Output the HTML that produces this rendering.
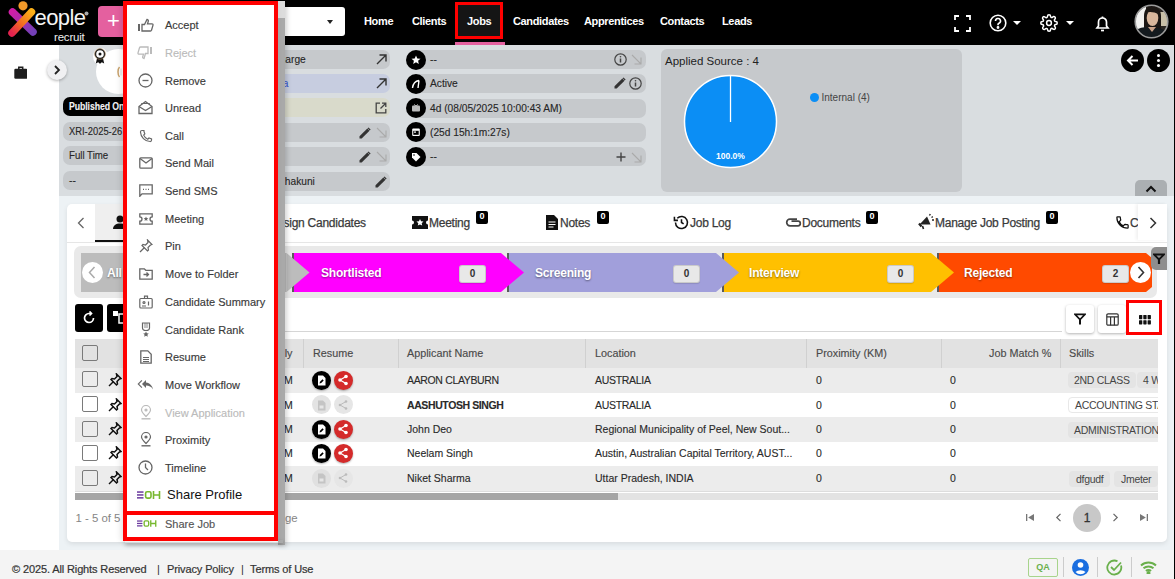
<!DOCTYPE html>
<html><head><meta charset="utf-8">
<style>
*{box-sizing:border-box;margin:0;padding:0}
html,body{width:1175px;height:579px;overflow:hidden;background:#f4f4f4;font-family:"Liberation Sans",sans-serif;color:#222;position:relative}
.a{position:absolute}
.nav{left:0;top:0;width:1175px;height:45px;background:#000}
.ni{position:absolute;top:14.3px;color:#fff;font-size:11px;font-weight:bold;letter-spacing:-0.35px;line-height:14px;white-space:nowrap}
.pill{position:absolute;height:19px;border-radius:7px;background:#c6c9cc;font-size:10.2px;line-height:19px;padding-left:6px;white-space:nowrap;overflow:hidden;color:#262626;-webkit-text-stroke:0.12px currentColor}
.ci{position:absolute;width:20px;height:20px;border-radius:50%;background:#000}
.mi{position:absolute;left:165px;font-size:11px;color:#3a3a3a;line-height:14px;white-space:nowrap;-webkit-text-stroke:0.15px currentColor}
.mico{position:absolute;left:137px;width:16px;height:16px}
.th{position:absolute;top:346px;font-size:10.8px;color:#4a4a4a;line-height:14px;white-space:nowrap;-webkit-text-stroke:0.15px currentColor}
.td{position:absolute;font-size:10.5px;color:#2a2a2a;line-height:14px;white-space:nowrap;-webkit-text-stroke:0.12px currentColor}
.row{position:absolute;left:75px;width:1083px;height:25px}
.cb{position:absolute;left:82px;width:16px;height:16px;border:1.5px solid #7a7a7a;border-radius:2px;background:transparent}
.stg{position:absolute;top:252px;height:40px}
.stt{position:absolute;top:266px;color:#fff;font-size:12px;font-weight:bold;text-shadow:0 1px 2px rgba(0,0,0,.45);line-height:14px;letter-spacing:-0.2px}
.cnt{position:absolute;top:265px;width:27px;height:18px;background:#e8e8e8;border-radius:3px;font-size:10px;font-weight:bold;text-align:center;line-height:16px;color:#333;border:1px solid rgba(0,0,0,.13);box-shadow:0 1px 1px rgba(0,0,0,.12)}
.tab{position:absolute;top:216px;font-size:12px;color:#3a3a3a;line-height:14px;white-space:nowrap;letter-spacing:-0.25px;-webkit-text-stroke:0.25px currentColor}
.bdg{position:absolute;top:211px;width:12px;height:12.5px;background:#000;color:#fff;font-size:9px;font-weight:bold;text-align:center;line-height:11px;border-radius:2px}
.chip{position:absolute;height:16px;border-radius:4px;background:#e4e4e4;font-size:10.5px;line-height:16px;padding:0 6px;color:#444;white-space:nowrap;letter-spacing:-0.3px}
</style></head><body>

<!-- NAVBAR -->
<div class="a nav"></div>
<!-- logo -->
<svg class="a" style="left:0px;top:0px" width="95" height="44" viewBox="0 0 95 44">
  <defs>
    <linearGradient id="g1" x1="0" y1="0" x2="1" y2="1"><stop offset="0" stop-color="#d01ea8"/><stop offset="1" stop-color="#7440b8"/></linearGradient>
    <linearGradient id="g2" x1="1" y1="0" x2="0" y2="1"><stop offset="0" stop-color="#fbb018"/><stop offset="0.55" stop-color="#f26a22"/><stop offset="1" stop-color="#e3234e"/></linearGradient>
  </defs>
  <line x1="12.5" y1="12" x2="33" y2="32" stroke="url(#g1)" stroke-width="7.5" stroke-linecap="round"/>
  <line x1="31.5" y1="12" x2="12" y2="33" stroke="url(#g2)" stroke-width="7.5" stroke-linecap="round"/>
  <circle cx="23" cy="5.8" r="4.6" fill="#f39a2a"/>
  <text x="34.5" y="25" font-family="Liberation Sans" font-size="22" fill="#f4f4f4" letter-spacing="-0.6">eople</text>
  <circle cx="86.5" cy="13.5" r="2" fill="#aaa"/>
  <text x="54" y="40.5" font-family="Liberation Sans" font-size="11.5" fill="#eee" letter-spacing="-0.2">recruit</text>
</svg>
<div class="a" style="left:98px;top:6px;width:31px;height:31px;background:#e4609f;border-radius:4px;color:#fff;font-size:22px;line-height:30px;text-align:center">+</div>
<div class="a" style="left:270px;top:7px;width:75px;height:29px;background:#fff;border-radius:3px"></div>
<div class="a" style="left:327px;top:19.5px;width:0;height:0;border-left:3.8px solid transparent;border-right:3.8px solid transparent;border-top:4.2px solid #222"></div>
<div class="ni" style="left:364px">Home</div>
<div class="ni" style="left:412px">Clients</div>
<div class="a" style="left:455px;top:2px;width:48px;height:37px;border:3.5px solid #f00;background:#151515"></div>
<div class="a" style="left:455px;top:42px;width:50px;height:3px;background:#e4609f"></div>
<div class="ni" style="left:467px">Jobs</div>
<div class="ni" style="left:513px">Candidates</div>
<div class="ni" style="left:584px">Apprentices</div>
<div class="ni" style="left:660px">Contacts</div>
<div class="ni" style="left:722px">Leads</div>
<!-- right icons -->
<svg class="a" style="left:954px;top:15px" width="17" height="17" viewBox="0 0 17 17" fill="none" stroke="#fff" stroke-width="1.8"><path d="M1 5V1h4M12 1h4v4M16 12v4h-4M5 16H1v-4"/></svg>
<svg class="a" style="left:989px;top:14px" width="18" height="18" viewBox="0 0 18 18" fill="none" stroke="#fff" stroke-width="1.6"><circle cx="9" cy="9" r="7.8"/><path d="M6.5 7a2.5 2.5 0 1 1 3.5 2.3c-.7.3-1 .8-1 1.5v.5"/><circle cx="9" cy="13.5" r=".6" fill="#fff"/></svg>
<div class="a" style="left:1013px;top:21px;width:0;height:0;border-left:4px solid transparent;border-right:4px solid transparent;border-top:4px solid #fff"></div>
<svg class="a" style="left:1040px;top:14px" width="18" height="18" viewBox="0 0 24 24" fill="none" stroke="#fff" stroke-width="2"><circle cx="12" cy="12" r="3.2"/><path d="M19.4 15a1.7 1.7 0 0 0 .3 1.8l.1.1a2 2 0 1 1-2.8 2.8l-.1-.1a1.7 1.7 0 0 0-1.8-.3 1.7 1.7 0 0 0-1 1.5V21a2 2 0 1 1-4 0v-.1a1.7 1.7 0 0 0-1.1-1.5 1.7 1.7 0 0 0-1.8.3l-.1.1a2 2 0 1 1-2.8-2.8l.1-.1a1.7 1.7 0 0 0 .3-1.8 1.7 1.7 0 0 0-1.5-1H3a2 2 0 1 1 0-4h.1a1.7 1.7 0 0 0 1.5-1.1 1.7 1.7 0 0 0-.3-1.8l-.1-.1a2 2 0 1 1 2.8-2.8l.1.1a1.7 1.7 0 0 0 1.8.3H9a1.7 1.7 0 0 0 1-1.5V3a2 2 0 1 1 4 0v.1a1.7 1.7 0 0 0 1 1.5 1.7 1.7 0 0 0 1.8-.3l.1-.1a2 2 0 1 1 2.8 2.8l-.1.1a1.7 1.7 0 0 0-.3 1.8V9a1.7 1.7 0 0 0 1.5 1H21a2 2 0 1 1 0 4h-.1a1.7 1.7 0 0 0-1.5 1z"/></svg>
<div class="a" style="left:1066px;top:21px;width:0;height:0;border-left:4px solid transparent;border-right:4px solid transparent;border-top:4px solid #fff"></div>
<svg class="a" style="left:1095px;top:15px" width="15" height="17" viewBox="0 0 15 17" fill="none" stroke="#fff" stroke-width="1.7"><path d="M2 13h11l-1.5-2V7a4 4 0 0 0-8 0v4z"/><path d="M6 15.5h3"/><path d="M7.5 1.5v1.5"/></svg>
<svg class="a" style="left:1134px;top:4px" width="35" height="35" viewBox="0 0 35 35">
<defs><clipPath id="av"><circle cx="17.5" cy="17.5" r="16"/></clipPath></defs>
<g clip-path="url(#av)">
<rect x="0" y="0" width="35" height="35" fill="#2a2622"/>
<rect x="0" y="3" width="12" height="23" fill="#f2f2f0"/>
<rect x="26" y="8" width="9" height="14" fill="#c9c0a8"/>
<path d="M10 12c0-7 4-10 8-10s9 3 9 10v16H10z" fill="#1c1714"/>
<ellipse cx="18.5" cy="14" rx="5.8" ry="8" fill="#d9b79c"/>
<path d="M11 9c2-5 11-6 13 1-3-2-9-3-13-1z" fill="#1c1714"/>
<path d="M0 28c4-4 9-5 14-5l5 2 5-1c5 1 9 3 11 5v6H0z" fill="#141a1e"/>
<path d="M14 23l4 5 4-5z" fill="#c9a288"/>
</g>
<circle cx="17.5" cy="17.5" r="16.3" fill="none" stroke="#9a9a9a" stroke-width="1.6"/>
</svg>

<!-- LEFT SIDEBAR -->
<div class="a" style="left:0;top:45px;width:59px;height:505px;background:#fff"></div>
<svg class="a" style="left:13.5px;top:66px" width="13.5" height="13" viewBox="0 0 13.5 13"><rect x="0.3" y="2.8" width="13" height="10" rx="1.2" fill="#1e1e1e"/><path d="M4.8 3V1.2h3.9V3" fill="none" stroke="#1e1e1e" stroke-width="1.5"/></svg>

<!-- CONTENT BG -->
<div class="a" style="left:59px;top:45px;width:1116px;height:505px;background:#edf2f5"></div>
<!-- header -->
<div class="a" style="left:59px;top:45px;width:1116px;height:151px;background:#d9dde0"></div>
<div class="a" style="left:47px;top:60px;width:20px;height:20px;border-radius:50%;background:#f0f0f2;box-shadow:0 1px 3px rgba(0,0,0,.3)"></div>
<svg class="a" style="left:53px;top:65px" width="8" height="10" viewBox="0 0 8 10" fill="none" stroke="#222" stroke-width="1.8"><path d="M2 1l4 4-4 4"/></svg>
<div class="a" style="left:96px;top:49px;width:45px;height:45px;border-radius:50%;background:#fff"></div>
<div class="a" style="left:92.5px;top:47.5px;width:15px;height:17px;border-radius:50%;background:#fff"></div>
<svg class="a" style="left:93px;top:48px" width="14" height="17" viewBox="0 0 14 17"><path d="M4.2 9.5L2.8 15.5l2.4-1.3 1.8 1.6 1-5" fill="#111"/><path d="M9.8 9.5l1.4 6-2.4-1.3-1.8 1.6-1-5" fill="#111"/><circle cx="7" cy="6" r="4.6" fill="none" stroke="#222" stroke-width="1.6"/><circle cx="7" cy="6" r="5.4" fill="none" stroke="#b08a5a" stroke-width=".5"/><circle cx="7" cy="6" r="1.5" fill="#111"/></svg>
<svg class="a" style="left:115px;top:66px" width="7" height="12" viewBox="0 0 7 12" fill="none"><path d="M4.5 1C2.5 3 2.5 9 4.5 11" stroke="#c9a26b" stroke-width="1.5"/><path d="M6 2.5v7" stroke="#ddd" stroke-width="1"/></svg>

<div class="pill" style="left:63px;top:97px;width:200px;background:#000;color:#f4f4f4;font-weight:bold;font-size:10.5px;letter-spacing:-0.1px"><span style="display:inline-block;transform:scaleX(.83);transform-origin:0 50%">Published On</span></div>
<div class="pill" style="left:63px;top:122px;width:200px"><span style="display:inline-block;transform:scaleX(.92);transform-origin:0 50%">XRI-2025-26</span></div>
<div class="pill" style="left:63px;top:146px;width:200px"><span style="display:inline-block;transform:scaleX(.95);transform-origin:0 50%">Full Time</span></div>
<div class="pill" style="left:63px;top:171px;width:200px">--</div>

<!-- middle column pills -->
<div class="pill" style="left:240px;top:50px;width:150px;padding-left:0;text-indent:21px">In Charge</div>
<div class="pill" style="left:240px;top:74px;width:150px;background:#c7cde0;color:#3b5bd0;padding-left:0;text-indent:27px">Data</div>
<div class="pill" style="left:240px;top:98px;width:150px;background:#d9dacb"></div>
<div class="pill" style="left:240px;top:123px;width:150px"></div>
<div class="pill" style="left:240px;top:147px;width:150px"></div>
<div class="pill" style="left:240px;top:172px;width:150px;padding-left:0;text-indent:38px">Shakuni</div>
<svg class="a" style="left:376px;top:54px" width="11" height="11" viewBox="0 0 11 11" fill="none" stroke="#333" stroke-width="1.4"><path d="M1 10L10 1M3.5 1H10v6.5"/></svg>
<svg class="a" style="left:376px;top:78px" width="11" height="11" viewBox="0 0 11 11" fill="none" stroke="#333" stroke-width="1.4"><path d="M1 10L10 1M3.5 1H10v6.5"/></svg>
<svg class="a" style="left:375px;top:102px" width="12" height="12" viewBox="0 0 12 12" fill="none" stroke="#444" stroke-width="1.3"><path d="M5 1.2H1.2v9.6h9.6V7"/><path d="M7 1.2h3.8V5M10.8 1.2L5.5 6.5"/></svg>
<svg class="a" style="left:359px;top:127px" width="12" height="12" viewBox="0 0 12 12"><path d="M0.5 11.5V9.3L8.3 1.5l2.2 2.2-7.8 7.8z" fill="#333"/><path d="M9 0.8l2.2 2.2" stroke="#333" stroke-width="1.2"/></svg>
<svg class="a" style="left:376px;top:127px" width="11" height="11" viewBox="0 0 11 11" fill="none" stroke="#aaa" stroke-width="1.1"><path d="M1 1l9 9M10 3.5V10H3.5"/></svg>
<svg class="a" style="left:359px;top:151px" width="12" height="12" viewBox="0 0 12 12"><path d="M0.5 11.5V9.3L8.3 1.5l2.2 2.2-7.8 7.8z" fill="#333"/><path d="M9 0.8l2.2 2.2" stroke="#333" stroke-width="1.2"/></svg>
<svg class="a" style="left:376px;top:151px" width="11" height="11" viewBox="0 0 11 11" fill="none" stroke="#aaa" stroke-width="1.1"><path d="M1 1l9 9M10 3.5V10H3.5"/></svg>
<svg class="a" style="left:375px;top:176px" width="12" height="12" viewBox="0 0 12 12"><path d="M0.5 11.5V9.3L8.3 1.5l2.2 2.2-7.8 7.8z" fill="#333"/><path d="M9 0.8l2.2 2.2" stroke="#333" stroke-width="1.2"/></svg>

<!-- right column pills -->
<div class="pill" style="left:413px;top:50px;width:233px;padding-left:17px">--</div>
<div class="pill" style="left:413px;top:74px;width:233px;padding-left:17px">Active</div>
<div class="pill" style="left:413px;top:99px;width:233px;padding-left:17px">4d (08/05/2025 10:00:43 AM)</div>
<div class="pill" style="left:413px;top:123px;width:233px;padding-left:17px">(25d 15h:1m:27s)</div>
<div class="pill" style="left:413px;top:147px;width:233px;padding-left:17px">--</div>
<div class="ci" style="left:406px;top:50px"></div>
<div class="ci" style="left:406px;top:74px"></div>
<div class="ci" style="left:406px;top:98px"></div>
<div class="ci" style="left:406px;top:122px"></div>
<div class="ci" style="left:406px;top:147px"></div>
<svg class="a" style="left:411px;top:55px" width="10" height="10" viewBox="0 0 10 10"><path d="M5 0.5l1.3 2.9 3.2.3-2.4 2.1.7 3.2L5 7.3 2.2 9l.7-3.2L.5 3.7l3.2-.3z" fill="#fff"/></svg>
<svg class="a" style="left:411px;top:79px" width="10" height="10" viewBox="0 0 10 10" fill="none" stroke="#fff" stroke-width="1.4"><path d="M1.5 9C2 5 4 2 8 1.5M8 1.5L7 9"/></svg>
<svg class="a" style="left:411px;top:103px" width="10" height="10" viewBox="0 0 10 10"><rect x="1" y="2.5" width="8" height="6" rx="1" fill="#bbb"/><path d="M3 1.5l2 1.5 2-1.5" stroke="#bbb" stroke-width="1" fill="none"/></svg>
<svg class="a" style="left:411px;top:127px" width="10" height="10" viewBox="0 0 10 10"><rect x="1.2" y="1.5" width="7.6" height="7.5" rx="1" fill="#fff"/><rect x="2.3" y="3.8" width="5.4" height="4" fill="#000"/><rect x="3" y="4.5" width="2" height="1.2" fill="#fff"/></svg>
<svg class="a" style="left:411px;top:152px" width="10" height="10" viewBox="0 0 10 10"><path d="M1 1h4.5L9.5 5 5 9.5 1 5.5z" fill="#fff"/><circle cx="3" cy="3" r=".8" fill="#000"/></svg>
<svg class="a" style="left:614px;top:53px" width="13" height="13" viewBox="0 0 13 13" fill="none" stroke="#444" stroke-width="1.2"><circle cx="6.5" cy="6.5" r="5.7"/><path d="M6.5 5.5v4" stroke-width="1.5"/><circle cx="6.5" cy="3.8" r=".8" fill="#444" stroke="none"/></svg>
<svg class="a" style="left:631px;top:54px" width="11" height="11" viewBox="0 0 11 11" fill="none" stroke="#aaa" stroke-width="1.1"><path d="M1 1l9 9M10 3.5V10H3.5"/></svg>
<svg class="a" style="left:614px;top:77px" width="12" height="12" viewBox="0 0 12 12"><path d="M0.5 11.5V9.3L8.3 1.5l2.2 2.2-7.8 7.8z" fill="#333"/><path d="M9 0.8l2.2 2.2" stroke="#333" stroke-width="1.2"/></svg>
<svg class="a" style="left:629px;top:77px" width="13" height="13" viewBox="0 0 13 13" fill="none" stroke="#444" stroke-width="1.2"><circle cx="6.5" cy="6.5" r="5.7"/><path d="M6.5 5.5v4" stroke-width="1.5"/><circle cx="6.5" cy="3.8" r=".8" fill="#444" stroke="none"/></svg>
<svg class="a" style="left:616px;top:152px" width="10" height="10" viewBox="0 0 10 10" fill="none" stroke="#444" stroke-width="1.4"><path d="M5 0.5v9M0.5 5h9"/></svg>
<svg class="a" style="left:631px;top:152px" width="11" height="11" viewBox="0 0 11 11" fill="none" stroke="#aaa" stroke-width="1.1"><path d="M1 1l9 9M10 3.5V10H3.5"/></svg>

<!-- chart card -->
<div class="a" style="left:661px;top:49px;width:301px;height:143px;background:#c6c9cc;border-radius:6px"></div>
<div class="a" style="left:665px;top:54px;font-size:11.5px;line-height:14px;color:#222">Applied Source : 4</div>
<svg class="a" style="left:683px;top:74px" width="95" height="95" viewBox="0 0 95 95"><circle cx="47.5" cy="47.5" r="46" fill="#0b8ef5" stroke="#fff" stroke-width="1.5"/><line x1="47.5" y1="1.5" x2="47.5" y2="48" stroke="#fff" stroke-width="1.3"/><text x="47.5" y="85" text-anchor="middle" font-family="Liberation Sans" font-size="8.5" font-weight="bold" fill="#fff">100.0%</text></svg>
<div class="a" style="left:810px;top:93px;width:9px;height:9px;border-radius:50%;background:#0b8ef5"></div>
<div class="a" style="left:821.5px;top:90.5px;font-size:10px;line-height:13px;color:#444">Internal (4)</div>

<div class="a" style="left:1121px;top:49px;width:23px;height:23px;border-radius:50%;background:#000"></div>
<svg class="a" style="left:1126px;top:54px" width="13" height="13" viewBox="0 0 13 13" fill="none" stroke="#fff" stroke-width="2"><path d="M12 6.5H2M6.5 2L2 6.5 6.5 11"/></svg>
<div class="a" style="left:1147px;top:49px;width:23px;height:23px;border-radius:50%;background:#000"></div>
<div class="a" style="left:1157px;top:54px;width:3px;height:3px;border-radius:50%;background:#fff;box-shadow:0 5px 0 #fff,0 10px 0 #fff"></div>
<div class="a" style="left:1135px;top:180px;width:32px;height:16px;background:#abafb2;border-radius:5px 5px 0 0"></div>
<svg class="a" style="left:1145px;top:185px" width="12" height="8" viewBox="0 0 12 8" fill="none" stroke="#111" stroke-width="2"><path d="M1.5 6.5L6 2l4.5 4.5"/></svg>

<!-- MAIN CARD -->
<div class="a" style="left:67px;top:204px;width:1100px;height:338px;background:#fff;border-radius:5px;box-shadow:0 2px 5px rgba(0,0,0,.09)"></div>
<!-- tab bar -->
<div class="a" style="left:67px;top:242px;width:1100px;height:1px;background:#e6e6e6"></div>
<svg class="a" style="left:76px;top:217px" width="10" height="12" viewBox="0 0 10 12" fill="none" stroke="#666" stroke-width="1.3"><path d="M7.5 1L2.5 6l5 5"/></svg>
<div class="a" style="left:95px;top:204px;width:60px;height:38px;background:#efefef"></div>
<div class="a" style="left:95px;top:240px;width:60px;height:2px;background:#111"></div>
<svg class="a" style="left:113px;top:215px" width="14" height="14" viewBox="0 0 14 14" fill="#111"><circle cx="7" cy="4" r="3.5"/><path d="M0 14c0-3.5 3-5.5 7-5.5s7 2 7 5.5z"/></svg>
<div class="tab" style="left:270px">Assign Candidates</div>
<svg class="a" style="left:412px;top:216px" width="16" height="13" viewBox="0 0 16 13"><path d="M0 0h16v4.5a2 2 0 0 0 0 4V13H0V8.5a2 2 0 0 0 0-4z" fill="#111"/><path d="M8 3l1.1 2.3 2.4.3-1.8 1.6.5 2.4L8 8.4 5.8 9.6l.5-2.4-1.8-1.6 2.4-.3z" fill="#fff"/></svg>
<div class="tab" style="left:429px">Meeting</div><div class="bdg" style="left:476px">0</div>
<svg class="a" style="left:545px;top:215px" width="14" height="15" viewBox="0 0 14 15"><path d="M1 0h8l4 4v11H1z" fill="#111"/><path d="M3.5 7h7M3.5 9.5h7M3.5 12h5" stroke="#fff" stroke-width="1.2"/></svg>
<div class="tab" style="left:560px">Notes</div><div class="bdg" style="left:597px">0</div>
<svg class="a" style="left:673px;top:214px" width="17" height="17" viewBox="0 0 24 24" fill="none" stroke="#111" stroke-width="2.2"><path d="M3.5 12a8.5 8.5 0 1 0 2.5-6"/><path d="M2 4v5h5" /><path d="M12 7.5V12l3 2"/></svg>
<div class="tab" style="left:690px">Job Log</div>
<svg class="a" style="left:785px;top:217px" width="17" height="11" viewBox="0 0 17 11" fill="none" stroke="#444" stroke-width="1.7"><path d="M12 2.2H5a3.3 3.3 0 0 0 0 6.6h8a2.3 2.3 0 0 0 0-4.6H6.5"/></svg>
<div class="tab" style="left:802px">Documents</div><div class="bdg" style="left:866px">0</div>
<svg class="a" style="left:918px;top:213px" width="17" height="17" viewBox="0 0 17 17"><path d="M1.5 11.5L9 3.5l3.5 8z" fill="#222"/><path d="M1 10.5l2.5 3" stroke="#222" stroke-width="2.2"/><path d="M4.5 13l1 3" stroke="#222" stroke-width="1.6"/><path d="M11.5 2.5l.8-1.5M14 7h2M13.5 4.5l1.3-.8" stroke="#222" stroke-width="1.4"/></svg>
<div class="tab" style="left:935px">Manage Job Posting</div><div class="bdg" style="left:1046px">0</div>
<svg class="a" style="left:1115px;top:215px" width="15" height="15" viewBox="0 0 24 24"><path d="M6.6 10.8a15 15 0 0 0 6.6 6.6l2.2-2.2a1 1 0 0 1 1-.25 11.4 11.4 0 0 0 3.6.6 1 1 0 0 1 1 1V20a1 1 0 0 1-1 1A17 17 0 0 1 3 4a1 1 0 0 1 1-1h3.5a1 1 0 0 1 1 1c0 1.25.2 2.45.6 3.6a1 1 0 0 1-.25 1z" fill="none" stroke="#111" stroke-width="2"/></svg>
<div class="tab" style="left:1130px;width:8.5px;overflow:hidden">Call</div>
<div class="a" style="left:1138px;top:204px;width:29px;height:36px;background:#fff;box-shadow:-2px 0 3px rgba(0,0,0,.06)"></div>
<svg class="a" style="left:1148px;top:217px" width="10" height="12" viewBox="0 0 10 12" fill="none" stroke="#333" stroke-width="1.5"><path d="M2.5 1l5 5-5 5"/></svg>

<!-- stages -->
<div class="a" style="left:74px;top:246px;width:1083px;height:51.5px;background:#e9e9e9;border-radius:7px"></div>
<svg class="a" style="left:80px;top:252.8px" width="1072" height="39" viewBox="0 0 1072 40" preserveAspectRatio="none"><rect x="1" y="0" width="205.5" height="40" fill="#bcbcbc"/><rect x="212" y="0" width="2" height="40" fill="#5a5a5a"/><rect x="214" y="0" width="207" height="40" fill="#ff00ff"/><rect x="427" y="0" width="2" height="40" fill="#5a5a5a"/><rect x="429" y="0" width="207" height="40" fill="#a19fdb"/><rect x="642" y="0" width="2" height="40" fill="#5a5a5a"/><rect x="644" y="0" width="207" height="40" fill="#ffc000"/><rect x="857" y="0" width="2" height="40" fill="#5a5a5a"/><rect x="859" y="0" width="207" height="40" fill="#ff4a00"/><polygon points="206.5,0 229.5,20 206.5,40" fill="#bcbcbc"/><polygon points="421,0 444,20 421,40" fill="#ff00ff"/><polygon points="636,0 659,20 636,40" fill="#a19fdb"/><polygon points="851,0 874,20 851,40" fill="#ffc000"/><polygon points="1066,0 1089,20 1066,40" fill="#ff4a00"/></svg>
<div class="a" style="left:82px;top:262px;width:21px;height:21px;border-radius:50%;background:#fff"></div>
<svg class="a" style="left:87px;top:266px" width="10" height="13" viewBox="0 0 10 13" fill="none" stroke="#aaa" stroke-width="1.5"><path d="M7.5 1L2.5 6.5l5 5.5"/></svg>
<div class="stt" style="left:107px">All</div>
<div class="stt" style="left:321px">Shortlisted</div><div class="cnt" style="left:459px">0</div>
<div class="stt" style="left:535px">Screening</div><div class="cnt" style="left:673px">0</div>
<div class="stt" style="left:749px">Interview</div><div class="cnt" style="left:887px">0</div>
<div class="stt" style="left:964px">Rejected</div><div class="cnt" style="left:1102px">2</div>
<div class="a" style="left:1130px;top:262px;width:21px;height:21px;border-radius:50%;background:#fff"></div>
<svg class="a" style="left:1136px;top:266px" width="10" height="13" viewBox="0 0 10 13" fill="none" stroke="#333" stroke-width="1.6"><path d="M2.5 1l5 5.5-5 5.5"/></svg>
<div class="a" style="left:1151px;top:247px;width:16px;height:23px;background:#8e8e8e;border-radius:5px 0 0 5px"></div>
<svg class="a" style="left:1153px;top:252.5px" width="12" height="12" viewBox="0 0 12 12" fill="none" stroke="#111" stroke-width="1.8"><path d="M1 1.5h10L6 6.5z"/><path d="M6 6v5" stroke-width="2.2"/></svg>

<!-- toolbar -->
<div class="a" style="left:75px;top:304px;width:28px;height:28px;background:#000;border-radius:3px"></div>
<svg class="a" style="left:82px;top:311px" width="14" height="14" viewBox="0 0 14 14" fill="none" stroke="#fff" stroke-width="1.7"><path d="M11.5 7A4.5 4.5 0 1 1 7 2.5h2"/><path d="M7.5 0.5l2 2-2 2"/></svg>
<div class="a" style="left:107px;top:304px;width:28px;height:28px;background:#000;border-radius:3px"></div>
<svg class="a" style="left:113px;top:311px" width="12" height="14" viewBox="0 0 12 14" fill="#fff"><rect x="0" y="0" width="5" height="5"/><rect x="6" y="3" width="6" height="9" fill="none" stroke="#fff" stroke-width="1.5"/></svg>
<div class="a" style="left:285px;top:331px;width:777px;height:1px;background:#d6d6d6"></div>
<div class="a" style="left:1066px;top:305px;width:28px;height:28px;background:#fff;border-radius:3px;box-shadow:0 1px 3px rgba(0,0,0,.3)"></div>
<svg class="a" style="left:1074px;top:313px" width="12" height="12" viewBox="0 0 12 12" fill="none" stroke="#111" stroke-width="1.7"><path d="M1 1.3h10L6 6.5 1 1.3z"/><path d="M6 6v5.5" stroke-width="2"/></svg>
<div class="a" style="left:1098px;top:305px;width:28px;height:28px;background:#fff;border-radius:3px;box-shadow:0 1px 3px rgba(0,0,0,.3)"></div>
<svg class="a" style="left:1106px;top:313px" width="13" height="13" viewBox="0 0 13 13" fill="none" stroke="#333" stroke-width="1.2"><rect x="0.8" y="0.8" width="11.4" height="11.4" rx="1.3"/><path d="M0.8 3.8h11.4M4.6 3.8v8.4M8.4 3.8v8.4"/></svg>
<div class="a" style="left:1126px;top:300px;width:35.5px;height:35px;border:3.6px solid #f00;background:#fff"></div>
<svg class="a" style="left:1138.8px;top:315px" width="12" height="9.5" viewBox="0 0 12 9.5" fill="#111"><rect x="0" y="0" width="3.3" height="4.2" rx=".6"/><rect x="4.3" y="0" width="3.3" height="4.2" rx=".6"/><rect x="8.6" y="0" width="3.3" height="4.2" rx=".6"/><rect x="0" y="5.2" width="3.3" height="4.2" rx=".6"/><rect x="4.3" y="5.2" width="3.3" height="4.2" rx=".6"/><rect x="8.6" y="5.2" width="3.3" height="4.2" rx=".6"/></svg>

<!-- TABLE -->
<div class="a" style="left:75px;top:339px;width:1083px;height:28.5px;background:#e2e2e2"></div>
<div class="a" style="left:303px;top:339px;width:1px;height:28.5px;background:#d0d0d0"></div>
<div class="a" style="left:398px;top:339px;width:1px;height:28.5px;background:#d0d0d0"></div>
<div class="a" style="left:585px;top:339px;width:1px;height:28.5px;background:#d0d0d0"></div>
<div class="a" style="left:806px;top:339px;width:1px;height:28.5px;background:#d0d0d0"></div>
<div class="a" style="left:941px;top:339px;width:1px;height:28.5px;background:#d0d0d0"></div>
<div class="a" style="left:1060px;top:339px;width:1px;height:28.5px;background:#d0d0d0"></div>
<div class="cb" style="top:345px"></div>
<div class="th" style="left:265.5px">Apply</div>
<div class="th" style="left:313px">Resume</div>
<div class="th" style="left:407px">Applicant Name</div>
<div class="th" style="left:595px">Location</div>
<div class="th" style="left:816px">Proximity (KM)</div>
<div class="th" style="left:989px">Job Match %</div>
<div class="th" style="left:1069px">Skills</div>

<div class="row" style="top:367.5px;height:25px;background:#ececec"></div>
<div class="row" style="top:392.5px;height:24.7px;background:#fff"></div>
<div class="row" style="top:417.2px;height:24.4px;background:#ececec"></div>
<div class="row" style="top:441.6px;height:24px;background:#fff"></div>
<div class="row" style="top:465.6px;height:25px;background:#ececec"></div>
<div class="a" style="left:75px;top:490.6px;width:1083px;height:1px;background:#ddd"></div>

<div class="cb" style="top:371px"></div><div class="cb" style="top:396px"></div><div class="cb" style="top:421px"></div><div class="cb" style="top:445px"></div><div class="cb" style="top:470px"></div>

<div class="td" style="left:277px;top:373px">PM</div>
<div class="td" style="left:277px;top:398px">PM</div>
<div class="td" style="left:277px;top:422px">PM</div>
<div class="td" style="left:277px;top:446px">PM</div>
<div class="td" style="left:277px;top:471px">PM</div>

<!-- resume icons -->
<div class="a" style="left:312px;top:371px;width:19px;height:19px;border-radius:50%;background:#000;box-shadow:0 1px 2px rgba(0,0,0,.3)"></div>
<div class="a" style="left:334px;top:371px;width:19px;height:19px;border-radius:50%;background:#d42a2a;box-shadow:0 1px 2px rgba(0,0,0,.3)"></div>
<div class="a" style="left:312px;top:395px;width:19px;height:19px;border-radius:50%;background:#e3e3e3"></div>
<div class="a" style="left:334px;top:395px;width:19px;height:19px;border-radius:50%;background:#e6e6e6"></div>
<div class="a" style="left:312px;top:420px;width:19px;height:19px;border-radius:50%;background:#000;box-shadow:0 1px 2px rgba(0,0,0,.3)"></div>
<div class="a" style="left:334px;top:420px;width:19px;height:19px;border-radius:50%;background:#d42a2a;box-shadow:0 1px 2px rgba(0,0,0,.3)"></div>
<div class="a" style="left:312px;top:444px;width:19px;height:19px;border-radius:50%;background:#000;box-shadow:0 1px 2px rgba(0,0,0,.3)"></div>
<div class="a" style="left:334px;top:444px;width:19px;height:19px;border-radius:50%;background:#d42a2a;box-shadow:0 1px 2px rgba(0,0,0,.3)"></div>
<div class="a" style="left:312px;top:469px;width:19px;height:19px;border-radius:50%;background:#e0e0e0"></div>
<div class="a" style="left:334px;top:469px;width:19px;height:19px;border-radius:50%;background:#e6e6e6"></div>

<svg class="a" style="left:108px;top:373.0px" width="14" height="14" viewBox="0 0 14 14"><path d="M8.5 1l4.5 4.5-1.5.5-2.5 2.5.5 2.5-1 1L3 6.5l1-1 2.5.5L9 3.5z" fill="none" stroke="#111" stroke-width="1.5"/><path d="M5.5 8.5L1 13" stroke="#111" stroke-width="1.5"/></svg>
<svg class="a" style="left:316px;top:375.0px" width="11" height="11" viewBox="0 0 11 11"><path d="M2 0.5h5l2.5 2.5v7.5H2z" fill="#fff"/><path d="M3.5 8.5l.5-1.8 2.5-2.5 1.2 1.2-2.5 2.5z" fill="#000"/></svg>
<svg class="a" style="left:337px;top:374.0px" width="12" height="12" viewBox="0 0 12 12"><circle cx="9" cy="2.5" r="1.8" fill="#fff"/><circle cx="3" cy="6" r="1.8" fill="#fff"/><circle cx="9" cy="9.5" r="1.8" fill="#fff"/><path d="M9 2.5L3 6l6 3.5" stroke="#fff" stroke-width="1.2" fill="none"/></svg>
<svg class="a" style="left:108px;top:397.5px" width="14" height="14" viewBox="0 0 14 14"><path d="M8.5 1l4.5 4.5-1.5.5-2.5 2.5.5 2.5-1 1L3 6.5l1-1 2.5.5L9 3.5z" fill="none" stroke="#111" stroke-width="1.5"/><path d="M5.5 8.5L1 13" stroke="#111" stroke-width="1.5"/></svg>
<svg class="a" style="left:316px;top:399.5px" width="11" height="11" viewBox="0 0 11 11"><path d="M2 0.5h5l2.5 2.5v7.5H2z" fill="#c4c4c4"/><rect x="3.5" y="5.5" width="4" height="3" fill="#e6e6e6"/></svg>
<svg class="a" style="left:337px;top:398.5px" width="12" height="12" viewBox="0 0 12 12"><circle cx="9" cy="2.5" r="1.3" fill="#bbb"/><circle cx="3" cy="6" r="1.3" fill="#bbb"/><circle cx="9" cy="9.5" r="1.3" fill="#bbb"/><path d="M9 2.5L3 6l6 3.5" stroke="#bbb" stroke-width="1" fill="none"/></svg>
<svg class="a" style="left:108px;top:422.0px" width="14" height="14" viewBox="0 0 14 14"><path d="M8.5 1l4.5 4.5-1.5.5-2.5 2.5.5 2.5-1 1L3 6.5l1-1 2.5.5L9 3.5z" fill="none" stroke="#111" stroke-width="1.5"/><path d="M5.5 8.5L1 13" stroke="#111" stroke-width="1.5"/></svg>
<svg class="a" style="left:316px;top:424.0px" width="11" height="11" viewBox="0 0 11 11"><path d="M2 0.5h5l2.5 2.5v7.5H2z" fill="#fff"/><path d="M3.5 8.5l.5-1.8 2.5-2.5 1.2 1.2-2.5 2.5z" fill="#000"/></svg>
<svg class="a" style="left:337px;top:423.0px" width="12" height="12" viewBox="0 0 12 12"><circle cx="9" cy="2.5" r="1.8" fill="#fff"/><circle cx="3" cy="6" r="1.8" fill="#fff"/><circle cx="9" cy="9.5" r="1.8" fill="#fff"/><path d="M9 2.5L3 6l6 3.5" stroke="#fff" stroke-width="1.2" fill="none"/></svg>
<svg class="a" style="left:108px;top:446.0px" width="14" height="14" viewBox="0 0 14 14"><path d="M8.5 1l4.5 4.5-1.5.5-2.5 2.5.5 2.5-1 1L3 6.5l1-1 2.5.5L9 3.5z" fill="none" stroke="#111" stroke-width="1.5"/><path d="M5.5 8.5L1 13" stroke="#111" stroke-width="1.5"/></svg>
<svg class="a" style="left:316px;top:448.0px" width="11" height="11" viewBox="0 0 11 11"><path d="M2 0.5h5l2.5 2.5v7.5H2z" fill="#fff"/><path d="M3.5 8.5l.5-1.8 2.5-2.5 1.2 1.2-2.5 2.5z" fill="#000"/></svg>
<svg class="a" style="left:337px;top:447.0px" width="12" height="12" viewBox="0 0 12 12"><circle cx="9" cy="2.5" r="1.8" fill="#fff"/><circle cx="3" cy="6" r="1.8" fill="#fff"/><circle cx="9" cy="9.5" r="1.8" fill="#fff"/><path d="M9 2.5L3 6l6 3.5" stroke="#fff" stroke-width="1.2" fill="none"/></svg>
<svg class="a" style="left:108px;top:470.5px" width="14" height="14" viewBox="0 0 14 14"><path d="M8.5 1l4.5 4.5-1.5.5-2.5 2.5.5 2.5-1 1L3 6.5l1-1 2.5.5L9 3.5z" fill="none" stroke="#111" stroke-width="1.5"/><path d="M5.5 8.5L1 13" stroke="#111" stroke-width="1.5"/></svg>
<svg class="a" style="left:316px;top:472.5px" width="11" height="11" viewBox="0 0 11 11"><path d="M2 0.5h5l2.5 2.5v7.5H2z" fill="#c4c4c4"/><rect x="3.5" y="5.5" width="4" height="3" fill="#e6e6e6"/></svg>
<svg class="a" style="left:337px;top:471.5px" width="12" height="12" viewBox="0 0 12 12"><circle cx="9" cy="2.5" r="1.3" fill="#bbb"/><circle cx="3" cy="6" r="1.3" fill="#bbb"/><circle cx="9" cy="9.5" r="1.3" fill="#bbb"/><path d="M9 2.5L3 6l6 3.5" stroke="#bbb" stroke-width="1" fill="none"/></svg>
<div class="td" style="left:407px;top:373px;letter-spacing:-0.35px">AARON CLAYBURN</div>
<div class="td" style="left:407px;top:398px;font-weight:bold;letter-spacing:-0.4px">AASHUTOSH SINGH</div>
<div class="td" style="left:407px;top:422px">John Deo</div>
<div class="td" style="left:407px;top:446px">Neelam Singh</div>
<div class="td" style="left:407px;top:471px">Niket Sharma</div>

<div class="td" style="left:595px;top:373px;letter-spacing:-0.3px">AUSTRALIA</div>
<div class="td" style="left:595px;top:398px;letter-spacing:-0.3px">AUSTRALIA</div>
<div class="td" style="left:595px;top:422px">Regional Municipality of Peel, New Sout...</div>
<div class="td" style="left:595px;top:446px">Austin, Australian Capital Territory, AUST...</div>
<div class="td" style="left:595px;top:471px">Uttar Pradesh, INDIA</div>

<div class="td" style="left:816px;top:373px">0</div><div class="td" style="left:950px;top:373px">0</div>
<div class="td" style="left:816px;top:398px">0</div><div class="td" style="left:950px;top:398px">0</div>
<div class="td" style="left:816px;top:422px">0</div><div class="td" style="left:950px;top:422px">0</div>
<div class="td" style="left:816px;top:446px">0</div><div class="td" style="left:950px;top:446px">0</div>
<div class="td" style="left:816px;top:471px">0</div><div class="td" style="left:950px;top:471px">0</div>

<div class="a" style="left:1062px;top:367px;width:96px;height:123px;overflow:hidden">
  <div class="chip" style="left:6px;top:5px">2ND CLASS</div>
  <div class="chip" style="left:75px;top:5px">4 WHEEL</div>
  <div class="chip" style="left:6px;top:30px;background:#fff;border:1px solid #e8e8e8;line-height:14px">ACCOUNTING STAFF</div>
  <div class="chip" style="left:6px;top:55px">ADMINISTRATION</div>
  <div class="chip" style="left:7px;top:104px;padding:0 7px">dfgudf</div>
  <div class="chip" style="left:52px;top:104px;padding:0 7px">Jmeter</div>
</div>

<!-- h scrollbar -->
<div class="a" style="left:75px;top:493px;width:1083px;height:7px;background:#e3e3e3"></div>
<div class="a" style="left:75px;top:493px;width:543px;height:7px;background:#a5a5a5"></div>

<div class="a" style="left:75.5px;top:510.5px;font-size:11.4px;color:#858585;line-height:14px;white-space:nowrap">1 - 5 of 5</div>
<div class="a" style="left:285px;top:510.5px;font-size:11.4px;color:#858585;line-height:14px">ge</div>
<!-- pagination -->
<svg class="a" style="left:1026px;top:514px" width="8" height="7" viewBox="0 0 8 7" fill="#777"><rect x="0" y="0" width="1.3" height="7"/><path d="M8 0v7L2.2 3.5z"/></svg>
<svg class="a" style="left:1054.5px;top:513px" width="7" height="9" viewBox="0 0 7 9" fill="none" stroke="#666" stroke-width="1.2"><path d="M5.5 0.8L1.8 4.5l3.7 3.7"/></svg>
<div class="a" style="left:1073px;top:503.5px;width:28px;height:28px;border-radius:50%;background:#c8c8c8;font-size:12px;color:#333;text-align:center;line-height:28px;-webkit-text-stroke:0.3px #333">1</div>
<svg class="a" style="left:1112px;top:513px" width="7" height="9" viewBox="0 0 7 9" fill="none" stroke="#666" stroke-width="1.2"><path d="M1.5 0.8l3.7 3.7-3.7 3.7"/></svg>
<svg class="a" style="left:1140px;top:514px" width="8" height="7" viewBox="0 0 8 7" fill="#777"><rect x="6.7" y="0" width="1.3" height="7"/><path d="M0 0v7l5.8-3.5z"/></svg>

<!-- FOOTER -->
<div class="a" style="left:12px;top:562px;font-size:11px;color:#333;line-height:14px;white-space:nowrap;letter-spacing:-0.12px;-webkit-text-stroke:0.2px #333">© 2025. All Rights Reserved</div><div class="a" style="left:157px;top:562px;font-size:11px;color:#333;line-height:14px">|</div><div class="a" style="left:167px;top:562px;font-size:11px;color:#333;line-height:14px;white-space:nowrap;letter-spacing:-0.12px;-webkit-text-stroke:0.2px #333">Privacy Policy</div><div class="a" style="left:241px;top:562px;font-size:11px;color:#333;line-height:14px">|</div><div class="a" style="left:250px;top:562px;font-size:11px;color:#333;line-height:14px;white-space:nowrap;letter-spacing:-0.12px;-webkit-text-stroke:0.2px #333">Terms of Use</div>
<div class="a" style="left:1028px;top:558px;width:30px;height:19px;border:1.5px solid #a8d48c;border-radius:2px;color:#6ab04c;font-size:9px;font-weight:bold;text-align:center;line-height:16px">QA</div>
<div class="a" style="left:1063px;top:557px;width:1px;height:20px;background:#ccc"></div>
<svg class="a" style="left:1072px;top:559px" width="17" height="17" viewBox="0 0 17 17"><circle cx="8.5" cy="8.5" r="8.5" fill="#1a6ee0"/><circle cx="8.5" cy="6" r="2.8" fill="#fff"/><path d="M3.5 13a6 4 0 0 1 10 0 6.8 6.8 0 0 1-10 0z" fill="#fff"/></svg>
<div class="a" style="left:1097px;top:557px;width:1px;height:20px;background:#ccc"></div>
<svg class="a" style="left:1106px;top:559px" width="17" height="17" viewBox="0 0 17 17" fill="none" stroke="#6ab04c" stroke-width="1.8"><path d="M15 6.5A7 7 0 1 1 11.5 2.3"/><path d="M5 8l3 3 7-7.5"/></svg>
<div class="a" style="left:1131px;top:557px;width:1px;height:20px;background:#ccc"></div>
<svg class="a" style="left:1140px;top:561px" width="17" height="13" viewBox="0 0 17 13" fill="none" stroke="#6ab04c" stroke-width="2"><path d="M1 4.5a11 11 0 0 1 15 0M3.5 7.3a7.5 7.5 0 0 1 10 0M6 10a3.5 3.5 0 0 1 5 0"/><circle cx="8.5" cy="12" r="1" fill="#6ab04c"/></svg>

<!-- MENU -->
<div class="a" style="left:278px;top:1px;width:7px;height:544px;background:#a9a9a9;box-shadow:2px 1px 5px rgba(0,0,0,.18)"></div>
<div class="a" style="left:278px;top:1px;width:7px;height:16.5px;background:#dcdcdc"></div>
<div class="a" style="left:123px;top:1px;width:155px;height:540px;box-shadow:-2px 0 6px rgba(0,0,0,.12)"></div>
<div class="a" style="left:123px;top:1px;width:155px;height:515px;border:4px solid #f00;background:#fff"></div>
<div class="a" style="left:125px;top:540px;width:158px;height:3px;box-shadow:0 2px 4px rgba(0,0,0,.35)"></div>
<div class="a" style="left:123px;top:511px;width:155px;height:30px;border:4.5px solid #f00;background:#fff"></div>


<svg class="a" style="left:137px;top:18px" width="17" height="14" viewBox="0 0 17 14" fill="none" stroke="#666" stroke-width="1.3"><rect x="1" y="6" width="2" height="7" fill="#666" stroke="none"/><path d="M5 6.5h2.5L10 1.5c1 0 1.6.8 1.3 1.8L10.5 5.8H15c.7 0 1.2.6 1 1.3l-1.5 5.2c-.2.5-.6.7-1 .7H5z"/></svg>
<svg class="a" style="left:137px;top:46px" width="17" height="14" viewBox="0 0 17 14" fill="none" stroke="#bbb" stroke-width="1.3"><rect x="13" y="1" width="2" height="7" fill="#bbb" stroke="none"/><path d="M11 7.5H8.5L7 12.5c-1 0-1.6-.8-1.3-1.8L6.5 8.2H2c-.7 0-1.2-.6-1-1.3l1.5-5.2c.2-.5.6-.7 1-.7H11z"/></svg>
<svg class="a" style="left:138px;top:73px" width="15" height="15" viewBox="0 0 15 15" fill="none" stroke="#666" stroke-width="1.3"><circle cx="7.5" cy="7.5" r="6.5"/><path d="M4.5 7.5h6"/></svg>
<svg class="a" style="left:138px;top:100px" width="15" height="15" viewBox="0 0 15 15" fill="none" stroke="#666" stroke-width="1.3"><path d="M1 6.5L7.5 1.5 14 6.5v7H1z"/><path d="M1 6.5l6.5 4 6.5-4"/><path d="M3.5 5V3.5h8V5" stroke-width="1"/></svg>
<svg class="a" style="left:139px;top:129px" width="14" height="14" viewBox="0 0 24 24" fill="none" stroke="#666" stroke-width="2"><path d="M5 2.5c-1.5 0-2.5 1.2-2.5 2.5C3 14 10 21 19 21.5c1.3 0 2.5-1 2.5-2.5v-2l-4.5-1.5-2 2c-3-1.3-5.7-4-7-7l2-2L8.5 4V2.5z"/></svg>
<svg class="a" style="left:139px;top:157px" width="14" height="12" viewBox="0 0 14 12" fill="none" stroke="#666" stroke-width="1.3"><rect x="0.8" y="0.8" width="12.4" height="10.4" rx="1"/><path d="M1 1.5l6 4.5 6-4.5"/></svg>
<svg class="a" style="left:139px;top:184px" width="14" height="13" viewBox="0 0 14 13" fill="none" stroke="#666" stroke-width="1.3"><path d="M0.8 0.8h12.4v9H3l-2.2 2.5z"/><path d="M4 5.3h1M6.5 5.3h1M9 5.3h1" stroke-width="1.2"/></svg>
<svg class="a" style="left:139px;top:213px" width="14" height="12" viewBox="0 0 14 12" fill="none" stroke="#666" stroke-width="1.3"><path d="M0.8 0.8h12.4v3a2.2 2.2 0 0 0 0 4.4v3H0.8v-3a2.2 2.2 0 0 0 0-4.4z"/><path d="M7 3.5l.7 1.5 1.6.2-1.2 1.1.3 1.6L7 7.1l-1.4.8.3-1.6-1.2-1.1 1.6-.2z" fill="#666" stroke="none"/></svg>
<svg class="a" style="left:139px;top:239px" width="14" height="14" viewBox="0 0 14 14" fill="none" stroke="#666" stroke-width="1.2"><path d="M8.5 1l4.5 4.5-1.5.5-2.5 2.5.5 2.5-1 1L3 6.5l1-1 2.5.5L9 3.5z"/><path d="M5.5 8.5L1 13"/></svg>
<svg class="a" style="left:139px;top:268px" width="14" height="12" viewBox="0 0 14 12" fill="none" stroke="#666" stroke-width="1.3"><path d="M0.8 0.8h4.5l1.5 1.5h6.4v8.9H0.8z"/><path d="M4.5 6.5h5M7.5 4.5l2 2-2 2"/></svg>
<svg class="a" style="left:139px;top:295px" width="14" height="14" viewBox="0 0 14 14" fill="none" stroke="#666" stroke-width="1.2"><rect x="0.8" y="3.5" width="12.4" height="9.5" rx="1"/><path d="M5.5 3.5V1.2h3v2.3"/><circle cx="5" cy="7.5" r="1"/><path d="M3 11h4M9.5 6.5v4"/></svg>
<svg class="a" style="left:141px;top:322px" width="10" height="15" viewBox="0 0 10 15" fill="none" stroke="#666" stroke-width="1.2"><path d="M1.5 1h7v5c0 1.5-1.5 2.5-3.5 2.5S1.5 7.5 1.5 6z"/><path d="M4 1v5M6 1v5" stroke-width=".8"/><path d="M5 9.5l.9 1.8 1.9.2-1.4 1.3.4 1.9L5 13.8l-1.8.9.4-1.9-1.4-1.3 1.9-.2z" fill="#666" stroke="none"/></svg>
<svg class="a" style="left:140px;top:350px" width="12" height="14" viewBox="0 0 12 14" fill="none" stroke="#666" stroke-width="1.3"><path d="M0.8 0.8h7l3.4 3.4v9H0.8z"/><path d="M3 7.5h6M3 9.5h6M3 11.5h6" stroke-width="1"/></svg>
<svg class="a" style="left:137px;top:379px" width="17" height="12" viewBox="0 0 17 12" fill="#666"><path d="M4.5 1L0.5 5l4 4 .8-.8L2.1 5l3.2-3.2z"/><path d="M9 1L5 5l4 4V6.5c3 0 5.5 1 7 4-.5-3.5-3-6.5-7-7z"/></svg>
<svg class="a" style="left:140px;top:405px" width="12" height="15" viewBox="0 0 12 15" fill="none" stroke="#bbb" stroke-width="1.2"><path d="M6 11.5C3.5 9 1.5 7 1.5 5a4.5 4.5 0 0 1 9 0c0 2-2 4-4.5 6.5z"/><circle cx="6" cy="5" r="1" fill="#bbb"/><path d="M1.5 13.8h9" stroke-width="1.4"/></svg>
<svg class="a" style="left:140px;top:432px" width="12" height="15" viewBox="0 0 12 15" fill="none" stroke="#666" stroke-width="1.2"><path d="M6 11.5C3.5 9 1.5 7 1.5 5a4.5 4.5 0 0 1 9 0c0 2-2 4-4.5 6.5z"/><circle cx="6" cy="5" r="1" fill="#666"/><path d="M1.5 13.8h9" stroke-width="1.4"/></svg>
<svg class="a" style="left:138px;top:460px" width="15" height="15" viewBox="0 0 15 15" fill="none" stroke="#666" stroke-width="1.3"><circle cx="7.5" cy="7.5" r="6.5"/><path d="M7.5 3.5v4l2.5 2.5"/></svg>
<div class="mi" style="left:165px;top:18px">Accept</div>
<div class="mi" style="left:165px;top:46px;color:#bbb">Reject</div>
<div class="mi" style="left:165px;top:74px">Remove</div>
<div class="mi" style="left:165px;top:101px">Unread</div>
<div class="mi" style="left:165px;top:129px">Call</div>
<div class="mi" style="left:165px;top:156px">Send Mail</div>
<div class="mi" style="left:165px;top:184px">Send SMS</div>
<div class="mi" style="left:165px;top:212px">Meeting</div>
<div class="mi" style="left:165px;top:239px">Pin</div>
<div class="mi" style="left:165px;top:267px">Move to Folder</div>
<div class="mi" style="left:165px;top:295px">Candidate Summary</div>
<div class="mi" style="left:165px;top:323px">Candidate Rank</div>
<div class="mi" style="left:165px;top:350px">Resume</div>
<div class="mi" style="left:165px;top:378px">Move Workflow</div>
<div class="mi" style="left:165px;top:406px;color:#bbb">View Application</div>
<div class="mi" style="left:165px;top:433px">Proximity</div>
<div class="mi" style="left:165px;top:461px">Timeline</div>
<div class="mi" style="left:167px;top:487px;font-size:13px;color:#111;line-height:16px;-webkit-text-stroke:0">Share Profile</div>
<div class="mi" style="left:165px;top:517px;color:#555">Share Job</div>
<svg class="a" style="left:136.5px;top:490.5px" width="24" height="8" viewBox="0 0 24 8"><g fill="#6a3a9e"><rect x="0" y="0.3" width="6.5" height="1.5"/><rect x="0" y="3.2" width="6.5" height="1.5"/><rect x="0" y="6.1" width="6.5" height="1.5"/></g><g fill="none" stroke="#77b82e" stroke-width="1.6"><rect x="8.6" y="0.8" width="5.4" height="6.3" rx="1.5"/><path d="M16.5 0v8M22.5 0v8M16.5 4h6"/></g></svg>
<svg class="a" style="left:136.5px;top:520.2px" width="20" height="7" viewBox="0 0 24 8"><g fill="#6a3a9e"><rect x="0" y="0.3" width="6.5" height="1.5"/><rect x="0" y="3.2" width="6.5" height="1.5"/><rect x="0" y="6.1" width="6.5" height="1.5"/></g><g fill="none" stroke="#77b82e" stroke-width="1.6"><rect x="8.6" y="0.8" width="5.4" height="6.3" rx="1.5"/><path d="M16.5 0v8M22.5 0v8M16.5 4h6"/></g></svg>

<div class="a" style="left:1173.5px;top:0;width:1.5px;height:579px;background:#000"></div>
</body></html>
